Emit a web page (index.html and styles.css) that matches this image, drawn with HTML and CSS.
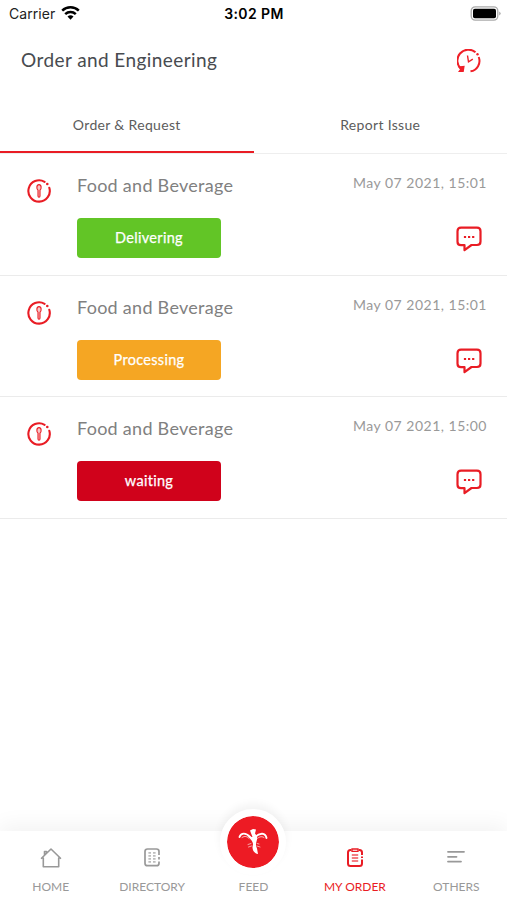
FILE: index.html
```html
<!DOCTYPE html>
<html lang="en">
<head>
<meta charset="utf-8">
<meta name="viewport" content="width=device-width, initial-scale=1">
<title>Order and Engineering</title>
<link rel="stylesheet" href="styles.css">
</head>
<body>
<svg class="defs" width="0" height="0">
  <symbol id="food" viewBox="0 0 24 24">
    <path d="M17.600 2.800A10.700 10.700 0 1 0 22.300 8.800" fill="none" stroke="currentColor" stroke-width="2.100" stroke-linecap="round"/>
    <circle cx="20.300" cy="5" r="1.300" fill="currentColor"/>
    <path d="M11 11.200C9.300 9.800 9.400 5.600 12 5.600s2.700 4.200 1 5.600v5.900c0 1.500-2 1.500-2 0z" fill="#f9c4c6" stroke="currentColor" stroke-width="1.100"/>
  </symbol>
  <symbol id="chat" viewBox="0 0 26 26">
    <path d="M5 1.700h16q3.500 0 3.500 3.500v10.300q0 3.500-3.500 3.500h-5.500L8.500 24.200v-5H5q-3.500 0-3.500-3.500V5.200Q1.500 1.700 5 1.700z" fill="none" stroke="currentColor" stroke-width="2.200" stroke-linejoin="round"/>
    <path d="M7.900 10h2.200v2H7.900zM12 10h2.200v2H12zM16.100 10h2.200v2h-2.200z" fill="currentColor"/>
  </symbol>
</svg>
<main class="screen">
  <div class="status">
    <div class="carrier"><span>Carrier</span>
      <svg width="19" height="14" viewBox="0 0 19 14"><g fill="none" stroke="#000" stroke-width="2.500"><path d="M1.200 4.600a12 12 0 0 1 16.600 0"/><path d="M4.200 8.200a7.700 7.700 0 0 1 10.600 0"/></g><path d="M6.500 10.600a4.300 4.300 0 0 1 6 0l-3 3.100z"/></svg>
    </div>
    <div class="time">3:02 PM</div>
    <svg class="battery" width="31" height="15" viewBox="0 0 31 15"><rect x="1.200" y=".9" width="26.600" height="13.200" rx="4" fill="#fff" stroke="#aaa" stroke-width="1.300"/><rect x="3" y="2.700" width="23" height="9.600" rx="1.800"/><path d="M29.200 5.400q3 2.100 0 4.200z" fill="#aaa"/></svg>
  </div>
  <header class="header">
    <h1>Order and Engineering</h1>
    <svg class="history" width="24" height="24" viewBox="0 0 24 24"><g fill="none" stroke="currentColor" stroke-width="2"><path d="M4.200 20A10.500 10.500 0 0 1 18.500 3.300"/><path d="M21.700 8A10.500 10.500 0 0 1 13.500 22.300"/><path d="M10.500 6.500l1 6.300 4.300-2.600" stroke-width="1.400"/></g><circle cx="20.500" cy="5.200" r="1.200" fill="currentColor"/><path d="M.7 17.500l7-.8-1 6.300L1 22.900l2-2.700z" fill="currentColor"/></svg>
  </header>
  <nav class="tabs"><div class="tab active"><span>Order &amp; Request</span></div><div class="tab"><span>Report Issue</span></div></nav>
  <section class="list">
    <article class="row">
      <svg class="food"><use href="#food"/></svg>
      <div class="info"><h2>Food and Beverage</h2><div class="badge green">Delivering</div></div>
      <div class="side"><time>May 07 2021, 15:01</time><svg class="chat"><use href="#chat"/></svg></div>
    </article>
    <article class="row">
      <svg class="food"><use href="#food"/></svg>
      <div class="info"><h2>Food and Beverage</h2><div class="badge orange">Processing</div></div>
      <div class="side"><time>May 07 2021, 15:01</time><svg class="chat"><use href="#chat"/></svg></div>
    </article>
    <article class="row">
      <svg class="food"><use href="#food"/></svg>
      <div class="info"><h2>Food and Beverage</h2><div class="badge red">waiting</div></div>
      <div class="side"><time>May 07 2021, 15:00</time><svg class="chat"><use href="#chat"/></svg></div>
    </article>
  </section>
  <nav class="bottom">
    <div class="item"><svg width="22" height="22" viewBox="0 0 22 22" fill="none" stroke="currentColor" stroke-width="1.600" stroke-linejoin="round" stroke-linecap="round"><path d="M3.300 11v8.800h15.400V11M1.500 11.300L11 2l9.500 9.300M4.500 7.500V4.500h2v1.300"/></svg><span>HOME</span></div>
    <div class="item"><svg width="22" height="22" viewBox="0 0 22 22" fill="none" stroke="currentColor" stroke-width="1.700"><path d="M18 8V4.500Q18 2 15.500 2H6.500Q4 2 4 4.500v11.700Q4 18.700 6.500 18.700h9Q18 18.700 18 16.200V14.500"/><path d="M18 10v2.500"/><path d="M8.700 5v11M13.300 5v11" stroke-width="2.600" stroke-dasharray="1.700 1.300" opacity=".65"/></svg><span>DIRECTORY</span></div>
    <div class="item feed"><div class="logo"><svg width="32" height="28" viewBox="0 0 32 28"><g fill="none" stroke="#fff" stroke-linecap="round"><path d="M2.500 9C4 4.500 9 4.500 13 9M29.500 10C28.500 4.500 23 4.500 18 9" stroke-width="1.900"/><path d="M5 9.500c3-2 5-1 7 1M27 9.500c-3-2-5 0-7 1" stroke-width=".7"/><path d="M14 15.500l-3 1M14.500 18l-3 1M20 15.500l2 .5M20 18l3 1" stroke-width=".6"/></g><path d="M13 2.500l3-1.500 3 .5-1 4c2.500 3 2.500 5 1.500 8-1 3-.5 5 .5 7l1 5.500c-4.500-1-6.500-5-5-9.500 0-4-3.500-5.500-4.500-8l4 .5z" fill="#fff"/></svg></div><span>FEED</span></div>
    <div class="item current"><svg width="22" height="22" viewBox="0 0 22 22" fill="none" stroke="currentColor" stroke-width="2"><path d="M7.500 3H6.500Q4 3 4 5.500v11Q4 19 6.500 19h9Q18 19 18 16.500V12.500M14.500 3h1Q18 3 18 5.500V8M18 9.500v1.500"/><path d="M8 2h6v2.300H8z" stroke-width="1.300"/><path d="M7.800 8h6.400M7.800 11h6.400M7.800 14h6.400" stroke-width="1.300" opacity=".75"/></svg><span>MY ORDER</span></div>
    <div class="item"><svg width="22" height="22" viewBox="0 0 22 22" fill="none" stroke="currentColor" stroke-width="1.800" stroke-linecap="round"><path d="M3 4.800h16M3 9.800h8.500M3 14.600h13"/></svg><span>OTHERS</span></div>
  </nav>
</main>
</body>
</html>
```
FILE: styles.css
```css
* { box-sizing: border-box; }
body { margin: 0; background: #fff; font-family: Lato, "Open Sans", sans-serif; }
svg { display: block; flex: none; }
.defs { position: absolute; }
.screen { height: 900px; display: flex; flex-direction: column; overflow: hidden; }
.status { height: 27px; padding: 0 6px 0 9px; display: grid; grid-template-columns: 1fr auto 1fr; align-items: center; font: 14px Inter, sans-serif; color: #222; }
.carrier { display: flex; align-items: center; gap: 6px; letter-spacing: .05px; }
.carrier svg { margin-top: -2px; }
.time { font-weight: 600; letter-spacing: .4px; color: #000; margin-right: 2px; }
.battery { justify-self: end; }
.header { height: 67px; padding: 0 26px 0 21px; display: flex; align-items: center; justify-content: space-between; color: #f01f28; }
h1 { margin: 0 0 3px; font-weight: 400; font-size: 19px; letter-spacing: .42px; color: #484b50; }
.tabs { height: 60px; display: flex; border-bottom: 1px solid #eee; }
.tab { flex: 1; height: 59px; padding-top: 3px; display: flex; align-items: center; justify-content: center; font-size: 14px; letter-spacing: .33px; color: #5c5c5c; border-bottom: 2px solid transparent; }
.tab.active { border-color: #e91c24; }
.row { height: 121.500px; border-bottom: 1px solid #ebebeb; display: flex; padding: 0 20px 0 27px; }
.food { width: 24px; height: 24px; margin-top: 25px; color: #e91c24; }
.info { margin-left: 26px; flex: 1; }
h2 { margin: 17px 0 0; height: 28px; line-height: 28px; font-size: 18px; font-weight: 400; letter-spacing: .27px; color: #808080; }
.badge { margin-top: 19px; width: 144px; height: 40px; border-radius: 4px; color: #fff; font-size: 14.500px; padding-bottom: 1px; letter-spacing: .3px; display: flex; align-items: center; justify-content: center; -webkit-text-stroke: .25px #fff; }
.green { background: #62c526; }
.orange { background: #f5a623; }
.red { background: #d0021b; }
.side { display: flex; flex-direction: column; align-items: flex-end; }
time { margin-top: 17px; line-height: 24px; font-size: 14px; letter-spacing: .5px; color: #999; white-space: nowrap; }
.chat { width: 26px; height: 26px; margin: 31px 5px 0 0; color: #e91c24; }
.bottom { margin-top: auto; height: 69px; display: grid; grid-template-columns: repeat(5, 1fr); grid-template-rows: 69px; background: #fff; box-shadow: 0 -6px 20px rgba(0,0,0,.05); }
.item { height: 69px; display: flex; flex-direction: column; align-items: center; justify-content: flex-end; padding-bottom: 5px; gap: 10px; font-size: 12px; color: #999; }
.item span { line-height: 16px; letter-spacing: 0; white-space: nowrap; }
.item.current { color: #e91c24; }
.logo { flex: none; width: 66px; height: 66px; border: 7px solid #fff; border-radius: 50%; background: #ed1b24; background-clip: padding-box; display: flex; align-items: center; justify-content: center; box-shadow: 0 -5px 8px rgba(0,0,0,.05); }
.feed { gap: 4px; }
```
